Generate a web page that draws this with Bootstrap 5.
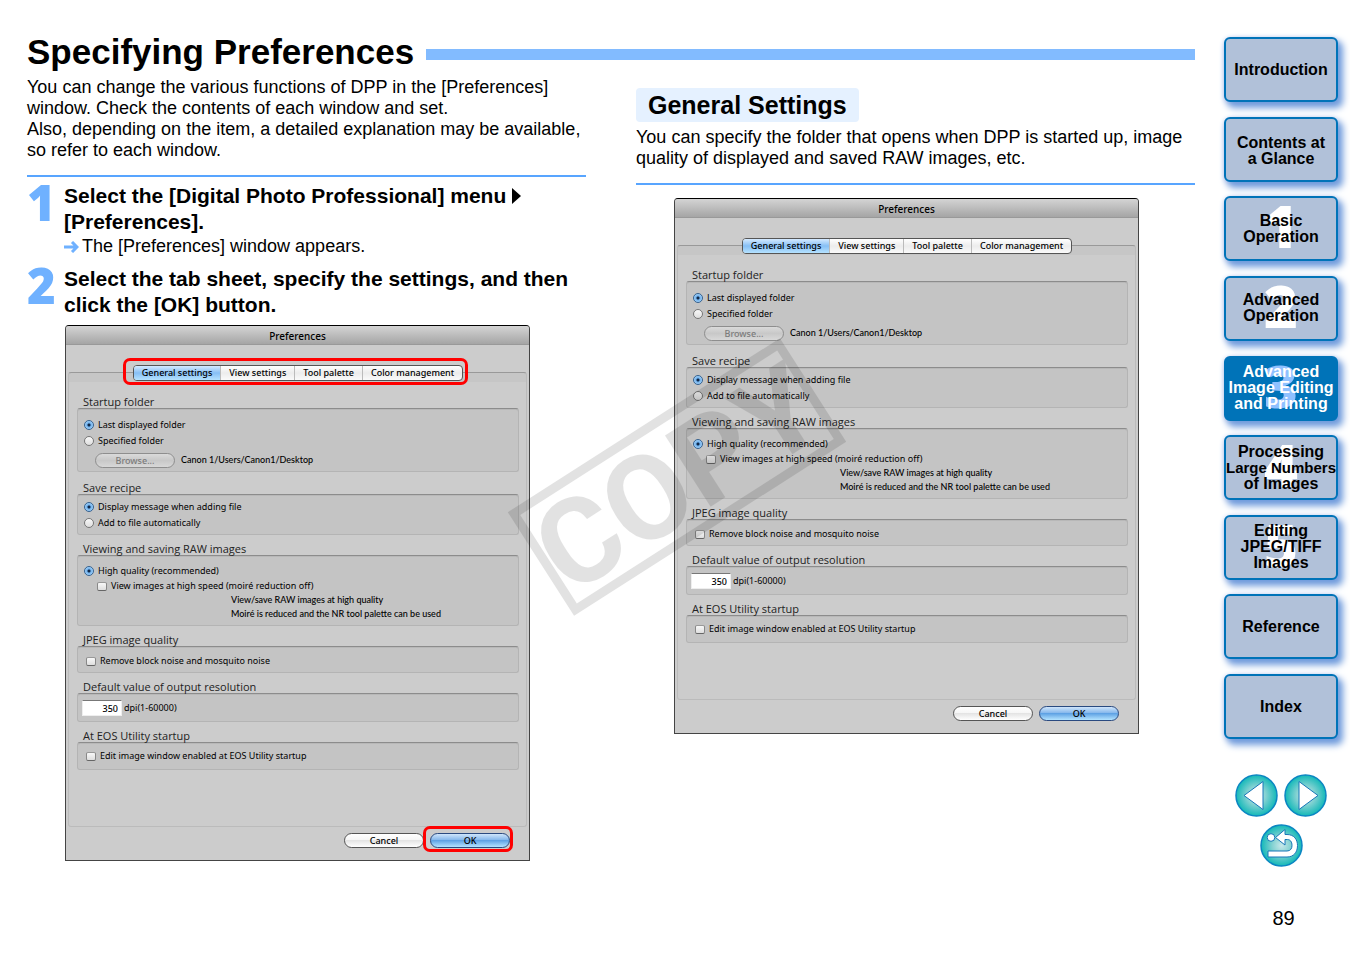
<!DOCTYPE html>
<html lang="en">
<head>
<meta charset="utf-8">
<meta name="viewport" content="width=device-width, initial-scale=1">
<title>Specifying Preferences</title>
<link href="https://cdn.jsdelivr.net/npm/bootstrap@5.3.0/dist/css/bootstrap.min.css" rel="stylesheet">
<style>
body{font-family:"Liberation Sans",Arial,sans-serif;font-size:18px;line-height:21px;color:#000;background:#fff}
.page{min-height:100vh;padding:32px 12px 0 27px;gap:29px}
.title-row{height:45px;gap:12px}
.title-row h1{font-size:35px;line-height:40px;font-weight:700;margin:0}
.title-bar{height:11px;margin-top:5px;background:#82bbff}
.cols{gap:50px}
.cols>section{flex:1 1 0;min-width:0}
.rule{border:0;border-top:2px solid #58a5ff;opacity:1;margin:14px 0 0}
.step{padding-left:37px;position:relative;margin-top:6px}
.step+.step{margin-top:9px}
.step h2{font-size:21px;line-height:26px;font-weight:700;margin:0}
.step-no{position:absolute;left:0;top:0;font:800 49px/38px "Open Sans",sans-serif;color:#6fb1ff}
.result{gap:3px;padding-top:1px}
.last-step{margin-bottom:7px}
.sub-title{display:inline-block;background:#e5f1ff;border-radius:4px;font-size:25px;line-height:34px;font-weight:700;padding:0 12px;margin:11px 0 5px}

/* Preferences dialog */
.dialog{width:100%;max-width:465px;height:536px;margin-left:38px;background:#ccc;border:1px solid #444;border-top-color:#000;border-radius:4px 4px 0 0;font:9px/16px "Noto Sans",sans-serif;color:#000}
.rule+.dialog{margin-top:13px}
.dialog-title{height:19px;line-height:20px;font-size:10px;font-weight:500;text-align:center;background:linear-gradient(#d4d4d4,#a5a5a5);border-bottom:1px solid #999;border-radius:3px 3px 0 0}
.pane{margin:27px 2px 0;height:455px;padding:0 7px 0 8px;border:1px solid #bbb;border-top-color:#999;border-radius:3px;background:linear-gradient(#c6c6c6 9px,#ccc 9px)}
.tabs{width:max-content;margin:-8px auto 15px;position:relative;height:16px;border:1px solid #555;border-radius:4px;background:linear-gradient(#fff,#ececec 50%,#fafafa);font-weight:500}
.tabs button{border:0;border-right:1px solid #bbb;background:none;padding:0 8px;line-height:14px;font-weight:500;color:#000}
.tabs button:last-child{border-right:0}
.tabs button.active{background:linear-gradient(#d5eaff,#86bff5 50%,#b5e2ff);border-radius:3px 0 0 3px}
.marked::after{content:"";position:absolute;border:3px solid #f00;border-radius:7px;pointer-events:none}
.tabs.marked::after{inset:-8px -6px -5px -11px}
.ok.marked::after{inset:-8px -4px -5px -8px}
.group-name{font:11px/12px "Open Sans",sans-serif;color:#222;margin:0 0 0 6px}
.box{border:1px solid #b4b4b4;border-top:1px solid #8c8c8c;border-radius:3px;background:#c4c4c4;box-shadow:inset 0 1px 0 #b8b8b8;padding-left:6px;margin-bottom:8px}
.box.folder{padding-top:8px;margin-bottom:10px}
.box.recipe{padding:4px 0 3px 6px}
.box.raw{padding:7px 0 5px 6px}
.box.jpeg{padding:6px 0 3px 8px}
.box.dpi{padding:6px 0 5px 4px}
.box.eos{padding:5px 0 5px 8px}
.box label{display:flex;align-items:center;gap:4px;white-space:nowrap}
.box label.sub{margin-left:13px;line-height:14px}
.box input[type=radio],.box input[type=checkbox]{appearance:none;width:10px;height:10px;margin:0;border:1px solid #777;background:linear-gradient(#f8f8f8,#dedede);flex:none}
.box input[type=checkbox]{border-color:#999 #888 #666;border-radius:2px;height:9px}
.box input[type=radio]{border-radius:50%}
.box input[type=radio]:checked{border-color:#35618f;background:radial-gradient(circle,#102848 1px,#6fb0ec 2px,#b8e0ff 5px)}
.notes,.path{font:9px/14px Lato,sans-serif;font-weight:500}
.notes{margin:0 0 0 147px;white-space:nowrap}
.notes span{display:block}
.notes span+span{line-height:13px}
.pill{border:1px solid #555;border-radius:8px;width:80px;height:15px;line-height:13px;padding:0;font-weight:500;color:#000;background:linear-gradient(#fff,#f6f6f6 45%,#e4e4e4 50%,#fff)}
.pill:disabled{border-color:#8e8e8e;color:#7c7c7c;background:linear-gradient(#dadada,#c8c8c8 50%,#d8d8d8)}
.pill.ok{border-color:#2a4a80;position:relative;background:linear-gradient(#cfe5fb,#86b8ec 45%,#5fa2e4 50%,#b4e4ff)}
.browse{height:22px;padding-left:11px;gap:6px}
.dpi input{width:40px;height:16px;border:1px solid #eee;border-top-color:#777;border-radius:0;background:#fff;text-align:right;padding:0 3px;font-weight:500;line-height:13px}
.dpi label{gap:2px}
.buttons{gap:6px;padding:6px 19px 0 0}

/* Chapter navigation */
.side{width:114px;flex:none;padding-top:5px}
.chapters{min-height:702px}
.chapter{height:65px;position:relative;z-index:0;border:2px solid #0073b8;border-radius:6px;background:#b1c1d9;box-shadow:4px 5px 7px 1px #6f9bdc,0 1px 5px #c6cdee;font-size:16px;line-height:16px;font-weight:700;color:#000;text-align:center;text-decoration:none;white-space:nowrap}
.chapter.active{background:#0073b8;color:#fff}
.chapter i{position:absolute;z-index:-1;inset:0;font:800 58px/56px "Open Sans",sans-serif;color:#fff}
.chapter.active i{color:#8fc1ff}
.tight{font-size:15px}
.pager{gap:7px 6px;margin-top:35px}
.pager svg{display:block;width:43px;height:43px}
.page-no{font-size:20px;margin:41px 0 0 5px}
.stamp{position:absolute;left:50%;top:50%;width:350px;height:290px;margin:-145px 0 0 -173px;opacity:.11;pointer-events:none}
</style>
</head>
<body>
<div class="page d-flex position-relative">
  <main class="flex-grow-1">
    <header class="title-row d-flex">
      <h1>Specifying Preferences</h1>
      <div class="flex-grow-1 pt-2 mt-1"><div class="title-bar"></div></div>
    </header>
    <div class="cols d-flex">
      <section>
        <p class="m-0">You can change the various functions of DPP in the [Preferences]<br>window. Check the contents of each window and set.<br>Also, depending on the item, a detailed explanation may be available,<br>so refer to each window.</p>
        <hr class="rule">
        <div class="step">
          <span class="step-no">1</span>
          <h2>Select the [Digital Photo Professional] menu <svg width="9" height="16" viewBox="0 0 9 16" style="vertical-align:-1px" aria-hidden="true"><path d="M0 0L9 8L0 16Z"/></svg><br>[Preferences].</h2>
          <div class="result d-flex align-items-center"><svg width="15" height="12" viewBox="0 0 15 12" aria-hidden="true"><path d="M0 6H12M8 1L13 6L8 11" fill="none" stroke="#6fb1ff" stroke-width="3"/></svg>The [Preferences] window appears.</div>
        </div>
        <div class="step last-step">
          <span class="step-no">2</span>
          <h2>Select the tab sheet, specify the settings, and then<br>click the [OK] button.</h2>
        </div>
        <div class="dialog" data-name="a" data-marked="marked"></div>
      </section>
      <section>
        <h2 class="sub-title">General Settings</h2>
        <p class="m-0">You can specify the folder that opens when DPP is started up, image<br>quality of displayed and saved RAW images, etc.</p>
        <hr class="rule">
        <div class="dialog" data-name="b" data-marked=""></div>
      </section>
    </div>
  </main>

  <nav class="side">
    <div class="chapters d-flex flex-column justify-content-between">
      <a class="chapter d-flex align-items-center justify-content-center" href="#">Introduction</a>
      <a class="chapter d-flex align-items-center justify-content-center pt-1" href="#">Contents at<br>a Glance</a>
      <a class="chapter d-flex align-items-center justify-content-center" href="#"><i>1</i>Basic<br>Operation</a>
      <a class="chapter d-flex align-items-center justify-content-center" href="#"><i>2</i>Advanced<br>Operation</a>
      <a class="chapter active d-flex align-items-center justify-content-center" href="#"><i>3</i>Advanced<br>Image Editing<br>and Printing</a>
      <a class="chapter d-flex align-items-center justify-content-center" href="#"><i>4</i><span>Processing<br><span class="tight">Large Numbers</span><br>of Images</span></a>
      <a class="chapter d-flex align-items-center justify-content-center" href="#"><i>5</i>Editing<br>JPEG/TIFF<br>Images</a>
      <a class="chapter d-flex align-items-center justify-content-center" href="#">Reference</a>
      <a class="chapter d-flex align-items-center justify-content-center" href="#">Index</a>
    </div>
    <div class="pager d-flex flex-wrap justify-content-center">
      <a href="#" aria-label="Previous page"><svg viewBox="0 0 43 43"><defs><radialGradient id="teal"><stop offset="0" stop-color="#c8e8ea"/><stop offset=".45" stop-color="#84d2d2"/><stop offset="1" stop-color="#12b8b8"/></radialGradient></defs><circle cx="21.500" cy="21.500" r="20.500" fill="url(#teal)" stroke="#0b86c2" stroke-width="1.500"/><path d="M9 21.500L28 7.500V35.500Z" fill="#fff" stroke="#1777b8"/></svg></a>
      <a href="#" aria-label="Next page"><svg viewBox="0 0 43 43"><circle cx="21.500" cy="21.500" r="20.500" fill="url(#teal)" stroke="#0b86c2" stroke-width="1.500"/><path d="M34 21.500L15 7.500V35.500Z" fill="#fff" stroke="#1777b8"/></svg></a>
      <a href="#" aria-label="Back"><svg viewBox="0 0 43 43"><circle cx="21.500" cy="21.500" r="20.500" fill="url(#teal)" stroke="#0b86c2" stroke-width="1.500"/><circle cx="11" cy="13.500" r="3.800" fill="#fff" stroke="#1777b8"/><path d="M15.500 13.500L25 5.500V10.500H27C34 10.500 37.500 15.500 37.500 21.500C37.500 28.500 33.500 33 27 33H8V27H27C30.500 27 32 24.500 32 21.500C32 17.500 30 15.500 27.500 15.500H25V21Z" fill="#fff" stroke="#1777b8"/></svg></a>
    </div>
    <div class="page-no text-center">89</div>
  </nav>

  <svg class="stamp" viewBox="-175 -145 350 290" aria-hidden="true">
    <g transform="rotate(-32.600)">
      <rect x="-157" y="-57" width="314" height="114" fill="none" stroke="#000" stroke-width="9"/>
      <text x="0" y="43" text-anchor="middle" font-family="Roboto,sans-serif" font-weight="700" font-size="119">COPY</text>
    </g>
  </svg>
</div>

<template id="prefs">
  <div class="dialog-title">Preferences</div>
  <div class="pane">
    <div class="tabs d-flex"><button class="active" type="button">General settings</button><button type="button">View settings</button><button type="button">Tool palette</button><button type="button">Color management</button></div>
    <h3 class="group-name">Startup folder</h3>
    <div class="box folder">
      <label><input type="radio" name="folder" checked>Last displayed folder</label>
      <label><input type="radio" name="folder">Specified folder</label>
      <div class="browse d-flex align-items-center"><button class="pill" type="button" disabled>Browse...</button><span class="path">Canon 1/Users/Canon1/Desktop</span></div>
    </div>
    <h3 class="group-name">Save recipe</h3>
    <div class="box recipe">
      <label><input type="radio" name="recipe" checked>Display message when adding file</label>
      <label><input type="radio" name="recipe">Add to file automatically</label>
    </div>
    <h3 class="group-name">Viewing and saving RAW images</h3>
    <div class="box raw">
      <label><input type="radio" name="raw" checked>High quality (recommended)</label>
      <label class="sub"><input type="checkbox">View images at high speed (moiré reduction off)</label>
      <p class="notes"><span>View/save RAW images at high quality</span><span>Moiré is reduced and the NR tool palette can be used</span></p>
    </div>
    <h3 class="group-name">JPEG image quality</h3>
    <div class="box jpeg"><label><input type="checkbox">Remove block noise and mosquito noise</label></div>
    <h3 class="group-name">Default value of output resolution</h3>
    <div class="box dpi"><label><input type="text" value="350">dpi(1-60000)</label></div>
    <h3 class="group-name">At EOS Utility startup</h3>
    <div class="box eos"><label><input type="checkbox">Edit image window enabled at EOS Utility startup</label></div>
  </div>
  <div class="buttons d-flex justify-content-end"><button class="pill" type="button">Cancel</button><button class="pill ok" type="button">OK</button></div>
</template>
<script src="https://cdn.jsdelivr.net/npm/bootstrap@5.3.0/dist/js/bootstrap.bundle.min.js"></script>
<script>
// Both dialogs share one template; radio names are made unique per dialog.
document.querySelectorAll('.dialog').forEach(function (d) {
  var part = document.getElementById('prefs').content.cloneNode(true);
  part.querySelectorAll('[type=radio]').forEach(function (r) { r.name = d.dataset.name + '-' + r.name; });
  if (d.dataset.marked) part.querySelectorAll('.tabs, .ok').forEach(function (e) { e.classList.add('marked'); });
  d.append(part);
});
</script>
</body>
</html>
